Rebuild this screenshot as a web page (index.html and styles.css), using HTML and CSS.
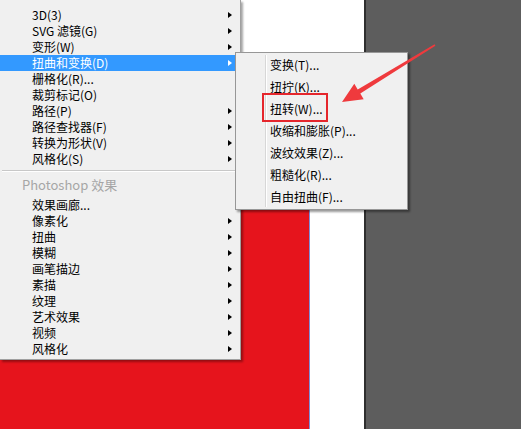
FILE: index.html
```html
<!DOCTYPE html>
<html lang="zh-CN">
<head>
    <meta charset="UTF-8">
    <meta name="viewport" content="width=device-width, initial-scale=1.0">
    <title>扭曲和变换</title>
    <link rel="stylesheet" href="styles.css">
</head>
<body>
    <div class="desk">
        <div class="doc">
            <div class="doc-red"></div>
        </div>
        <div class="paper"></div>
        <div class="dark"></div>
    </div>

    <div class="menu main-menu">
        <div class="item sub">3D(3)</div>
        <div class="item sub">SVG 滤镜(G)</div>
        <div class="item sub">变形(W)</div>
        <div class="item sub active">扭曲和变换(D)</div>
        <div class="item">栅格化(R)...</div>
        <div class="item">裁剪标记(O)</div>
        <div class="item sub">路径(P)</div>
        <div class="item sub">路径查找器(F)</div>
        <div class="item sub">转换为形状(V)</div>
        <div class="item sub">风格化(S)</div>
        <div class="separator"></div>
        <div class="group-title">Photoshop 效果</div>
        <div class="item">效果画廊...</div>
        <div class="item sub">像素化</div>
        <div class="item sub">扭曲</div>
        <div class="item sub">模糊</div>
        <div class="item sub">画笔描边</div>
        <div class="item sub">素描</div>
        <div class="item sub">纹理</div>
        <div class="item sub">艺术效果</div>
        <div class="item sub">视频</div>
        <div class="item sub">风格化</div>
    </div>

    <div class="menu sub-menu">
        <div class="sub-item">变换(T)...</div>
        <div class="sub-item">扭拧(K)...</div>
        <div class="sub-item">扭转(W)...</div>
        <div class="sub-item">收缩和膨胀(P)...</div>
        <div class="sub-item">波纹效果(Z)...</div>
        <div class="sub-item">粗糙化(R)...</div>
        <div class="sub-item">自由扭曲(F)...</div>
        <div class="mark"></div>
    </div>

    <svg class="pointer" width="521" height="429" viewBox="0 0 521 429">
        <polygon fill="#ef3a3d" points="342,102 354.3,83.8 357.7,89.4 434.6,44.2 435.4,45.8 360.3,93.6 363.7,99.2"/>
    </svg>
</body>
</html>
```

FILE: styles.css
```css
body {
    margin: 0;
    width: 521px;
    height: 429px;
    overflow: hidden;
    position: relative;
    font-family: "Noto Sans CJK SC", "Noto Sans", sans-serif;
    font-size: 12px;
    color: #000;
    background: #fff;
}
.desk {
    display: flex;
    height: 429px;
}
.doc {
    width: 310px;
    display: flex;
    flex-direction: column;
    background: #fff;
}
.doc-red {
    flex: 1;
    margin-top: 150px;
    background: #e6141c;
    border-right: 1px solid #7b8ed8;
}
.paper {
    width: 54px;
    background: #fff;
}
.dark {
    flex: 1;
    background: #5d5d5d;
    border-left: 2px solid #2f2f2f;
}
.menu {
    position: absolute;
    background: #f0f0f0;
}
.main-menu {
    left: 0;
    top: 0;
    width: 240px;
    padding: 7px 0 2px;
    border-right: 1px solid #a0a0a0;
    border-bottom: 1px solid #a0a0a0;
    box-shadow: 2px 2px 2px rgba(0, 0, 0, 0.35);
}
.item {
    height: 16px;
    line-height: 16px;
    padding: 0 8px 0 32px;
    display: flex;
    justify-content: space-between;
    align-items: center;
    white-space: nowrap;
}
.item.sub::after {
    content: "";
    border-left: 4px solid #000;
    border-top: 3.5px solid transparent;
    border-bottom: 3.5px solid transparent;
}
.item.active {
    background: #3399ff;
    color: #fff;
}
.item.active::after {
    border-left-color: #fff;
}
.separator {
    margin: 3px 1px 0 2px;
    height: 1px;
    background: #c8c8c8;
    border-bottom: 1px solid #fff;
}
.group-title {
    height: 25px;
    line-height: 26px;
    padding-left: 22px;
    font-size: 13px;
    color: #a6a6a6;
}
.sub-menu {
    left: 235px;
    top: 52px;
    width: 171px;
    padding: 1px 0;
    border: 1px solid #979797;
    box-shadow: 2px 2px 2px rgba(0, 0, 0, 0.4);
}
.sub-menu::before {
    content: "";
    position: absolute;
    left: 29px;
    top: 2px;
    bottom: 2px;
    width: 1px;
    background: #d7d7d7;
    border-right: 1px solid #fff;
}
.sub-item {
    height: 22px;
    line-height: 22px;
    padding-left: 34px;
    white-space: nowrap;
}
.mark {
    position: absolute;
    left: 26px;
    top: 40px;
    width: 62px;
    height: 25px;
    border: 2px solid #e5262c;
}
.pointer {
    position: absolute;
    left: 0;
    top: 0;
}
```
